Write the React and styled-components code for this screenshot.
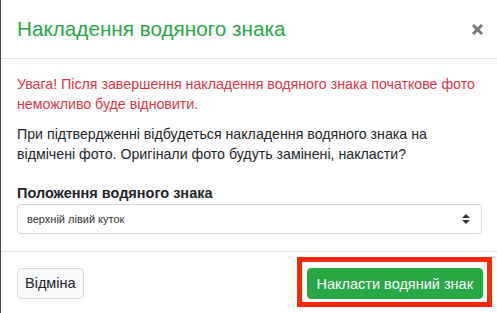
import React, { useState } from 'react';
import styled, { createGlobalStyle } from 'styled-components';

const GlobalStyle = createGlobalStyle`
  html, body {
    margin: 0;
    padding: 0;
    background: #fff;
  }
  body {
    font-family: "Liberation Sans", Arial, sans-serif;
    color: #212529;
    border-left: 1px solid #4a4a4a;
    min-height: 313px;
    box-sizing: border-box;
  }
`;

const Modal = styled.div`
  width: 496px;
  display: flex;
  flex-direction: column;
`;

const Header = styled.div`
  display: flex;
  align-items: center;
  justify-content: space-between;
  padding: 15px 13px 15px 16px;
  height: 28px;
  border-bottom: 1px solid #e5e5e5;
`;

const Title = styled.h4`
  margin: 0;
  font-size: 20.7px;
  font-weight: 400;
  line-height: 28px;
  color: #28a745;
`;

const Close = styled.button`
  border: none;
  background: none;
  padding: 0;
  width: 14px;
  height: 14px;
  display: flex;
  align-items: center;
  justify-content: center;
  cursor: pointer;
`;

const Body = styled.div`
  padding: 15px 15px 17px 16px;
`;

const Text = styled.p`
  margin: 0 0 10px;
  font-size: 14.2px;
  line-height: 20px;
  color: ${p => (p.$warn ? '#dc3545' : '#212529')};
`;

const Label = styled.label`
  display: block;
  margin: 19px 0 1px;
  font-size: 14.5px;
  font-weight: 700;
  line-height: 20px;
  color: #212529;
`;

const SelectWrap = styled.div`
  position: relative;
  height: 30px;
`;

const Select = styled.select`
  width: 100%;
  height: 30px;
  padding: 0 30px 0 9px;
  border: 1px solid #d6d6d6;
  border-radius: 4px;
  background: #fff;
  font-family: "Liberation Sans", Arial, sans-serif;
  font-size: 11px;
  color: #333;
  appearance: none;
  box-sizing: border-box;
`;

const Arrows = styled.svg`
  position: absolute;
  right: 12px;
  top: 10px;
  pointer-events: none;
`;

const Footer = styled.div`
  display: flex;
  align-items: center;
  justify-content: space-between;
  padding: 5px 5px 6px 16px;
  border-top: 1px solid #e5e5e5;
`;

const Highlight = styled.span`
  display: inline-flex;
  padding: 6px 4px 3px 5px;
  border: 5px solid #ff2600;
`;

const Button = styled.button`
  height: 31px;
  padding: ${p => (p.$primary ? '0 9px' : '0 7px')};
  margin-top: ${p => (p.$primary ? '0' : '2px')};
  border-radius: 4px;
  font-family: "Liberation Sans", Arial, sans-serif;
  font-size: 14.5px;
  cursor: pointer;
  border: 1px solid ${p => (p.$primary ? '#28a745' : '#dcdcdc')};
  background: ${p => (p.$primary ? '#28a745' : '#f8f9fa')};
  color: ${p => (p.$primary ? '#fff' : '#212529')};
`;

export default function App() {
  const [pos, setPos] = useState('tl');

  return (
    <>
      <GlobalStyle />
      <Modal>
        <Header>
          <Title>Накладення водяного знака</Title>
          <Close aria-label="Закрити">
            <svg width="13" height="13" viewBox="0 0 13 13">
              <path d="M2 2 L11 11 M11 2 L2 11" stroke="#7a7a7a" strokeWidth="3" strokeLinecap="butt" />
            </svg>
          </Close>
        </Header>
        <Body>
          <Text $warn>
            Увага! Після завершення накладення водяного знака початкове фото неможливо буде відновити.
          </Text>
          <Text>
            При підтвердженні відбудеться накладення водяного знака на відмічені фото. Оригінали фото будуть замінені, накласти?
          </Text>
          <Label htmlFor="pos">Положення водяного знака</Label>
          <SelectWrap>
            <Select id="pos" value={pos} onChange={e => setPos(e.target.value)}>
              <option value="tl">верхній лівий куток</option>
              <option value="tr">верхній правий куток</option>
              <option value="bl">нижній лівий куток</option>
              <option value="br">нижній правий куток</option>
            </Select>
            <Arrows width="8" height="10" viewBox="0 0 8 10">
              <path d="M4 0 L8 4 L0 4 Z M0 6 L8 6 L4 10 Z" fill="#333" />
            </Arrows>
          </SelectWrap>
        </Body>
        <Footer>
          <Button>Відміна</Button>
          <Highlight>
            <Button $primary>Накласти водяний знак</Button>
          </Highlight>
        </Footer>
      </Modal>
    </>
  );
}
